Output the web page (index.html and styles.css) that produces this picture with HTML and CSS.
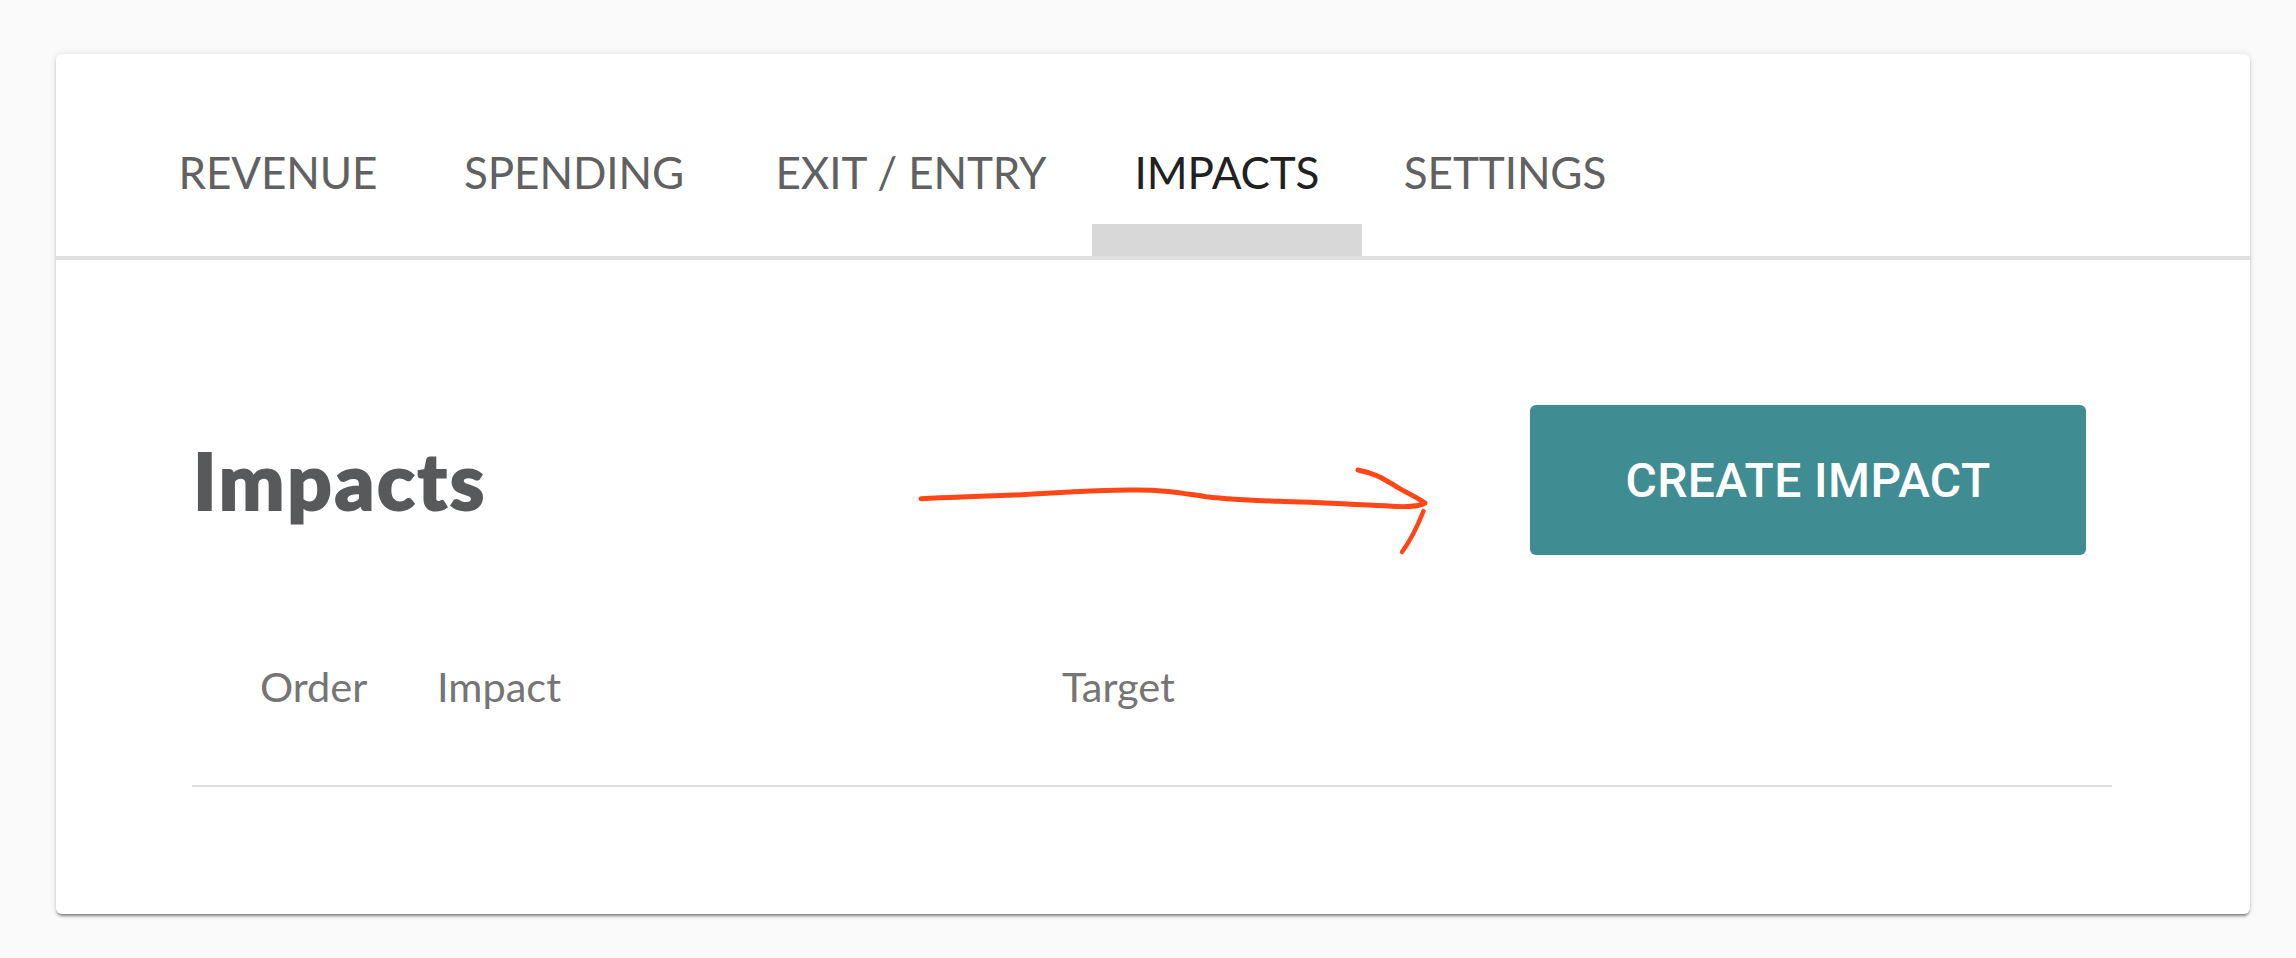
FILE: index.html
```html
<!DOCTYPE html>
<html lang="en">
<head>
<meta charset="utf-8">
<title>Impacts</title>
<link rel="stylesheet" href="styles.css">
</head>
<body>
<main class="card">
  <nav class="tabs">
    <a class="tab">REVENUE</a>
    <a class="tab">SPENDING</a>
    <a class="tab">EXIT / ENTRY</a>
    <a class="tab tab-active">IMPACTS</a>
    <a class="tab">SETTINGS</a>
  </nav>
  <section class="content">
    <header class="head">
      <h1 class="title">Impacts</h1>
      <button class="create">CREATE IMPACT</button>
    </header>
    <div class="table-head">
      <span class="col">Order</span>
      <span class="col">Impact</span>
      <span class="col">Target</span>
    </div>
  </section>
  <svg class="arrow" viewBox="0 0 520 95" width="520" height="95" fill="none" stroke="#ff4617" stroke-width="5" stroke-linecap="round" stroke-linejoin="round">
    <path d="M6 33.7C40 32 70 31 100 30C140 28 180 25 215 25C250 24.5 265 28 291 31.7C320 35 340 35.5 370 36.5C410 37.5 450 40 482 41.5C495 42 505 41 510 38C500 31 490 27 482 22C470 15 463 9 443 5"/>
    <path d="M508.5 46C503 60 498 72 487 87" stroke-width="4.5"/>
  </svg>
</main>
</body>
</html>
```
FILE: styles.css
```css
* { box-sizing: border-box; }
html, body { margin: 0; height: 958px; overflow: hidden; }
body {
  background: #fafafa;
  padding: 54px 46px 44px 56px;
  font-family: Lato, "Noto Sans", sans-serif;
}
.card {
  position: relative;
  height: 860px;
  background: #fff;
  border-radius: 6px;
  box-shadow: 0 3px 3px -1px rgba(0,0,0,.45), 0 0 6px rgba(0,0,0,.12);
}
.tabs {
  display: grid;
  grid-template-columns: 280px 312px 362px 270px 286px;
  height: 206px;
  padding-left: 82px;
  border-bottom: 4px solid #e0e0e0;
}
.tab {
  display: block;
  padding-top: 92px;
  text-align: center;
  font-size: 44px;
  line-height: 52px;
  letter-spacing: -0.1px;
  color: #616161;
  white-space: nowrap;
}
.tab-active {
  color: #212121;
  box-shadow: inset 0 -32px 0 #d8d8d8;
}
.content {
  padding: 145px 164px 0 137px;
}
.head {
  display: flex;
  align-items: center;
  justify-content: space-between;
  height: 150px;
}
.title {
  margin: 0;
  font-size: 78px;
  font-weight: 900;
  letter-spacing: 2.7px;
  color: #58595b;
  -webkit-text-stroke: 2px #58595b;
}
.create {
  width: 556px;
  height: 150px;
  border: 0;
  border-radius: 6px;
  background: #3f8c92;
  color: #fff;
  font-family: Roboto, sans-serif;
  font-size: 48px;
  font-weight: 500;
  letter-spacing: 0.4px;
}
.table-head {
  display: grid;
  grid-template-columns: 177px 625px 1fr;
  height: 155px;
  margin: 77px -26px 0 -1px;
  padding: 30px 0 0 68px;
  border-bottom: 2px solid #dedede;
  font-size: 41.5px;
  line-height: 48px;
  color: #757575;
}
.arrow {
  position: absolute;
  left: 859px;
  top: 411px;
}
```
